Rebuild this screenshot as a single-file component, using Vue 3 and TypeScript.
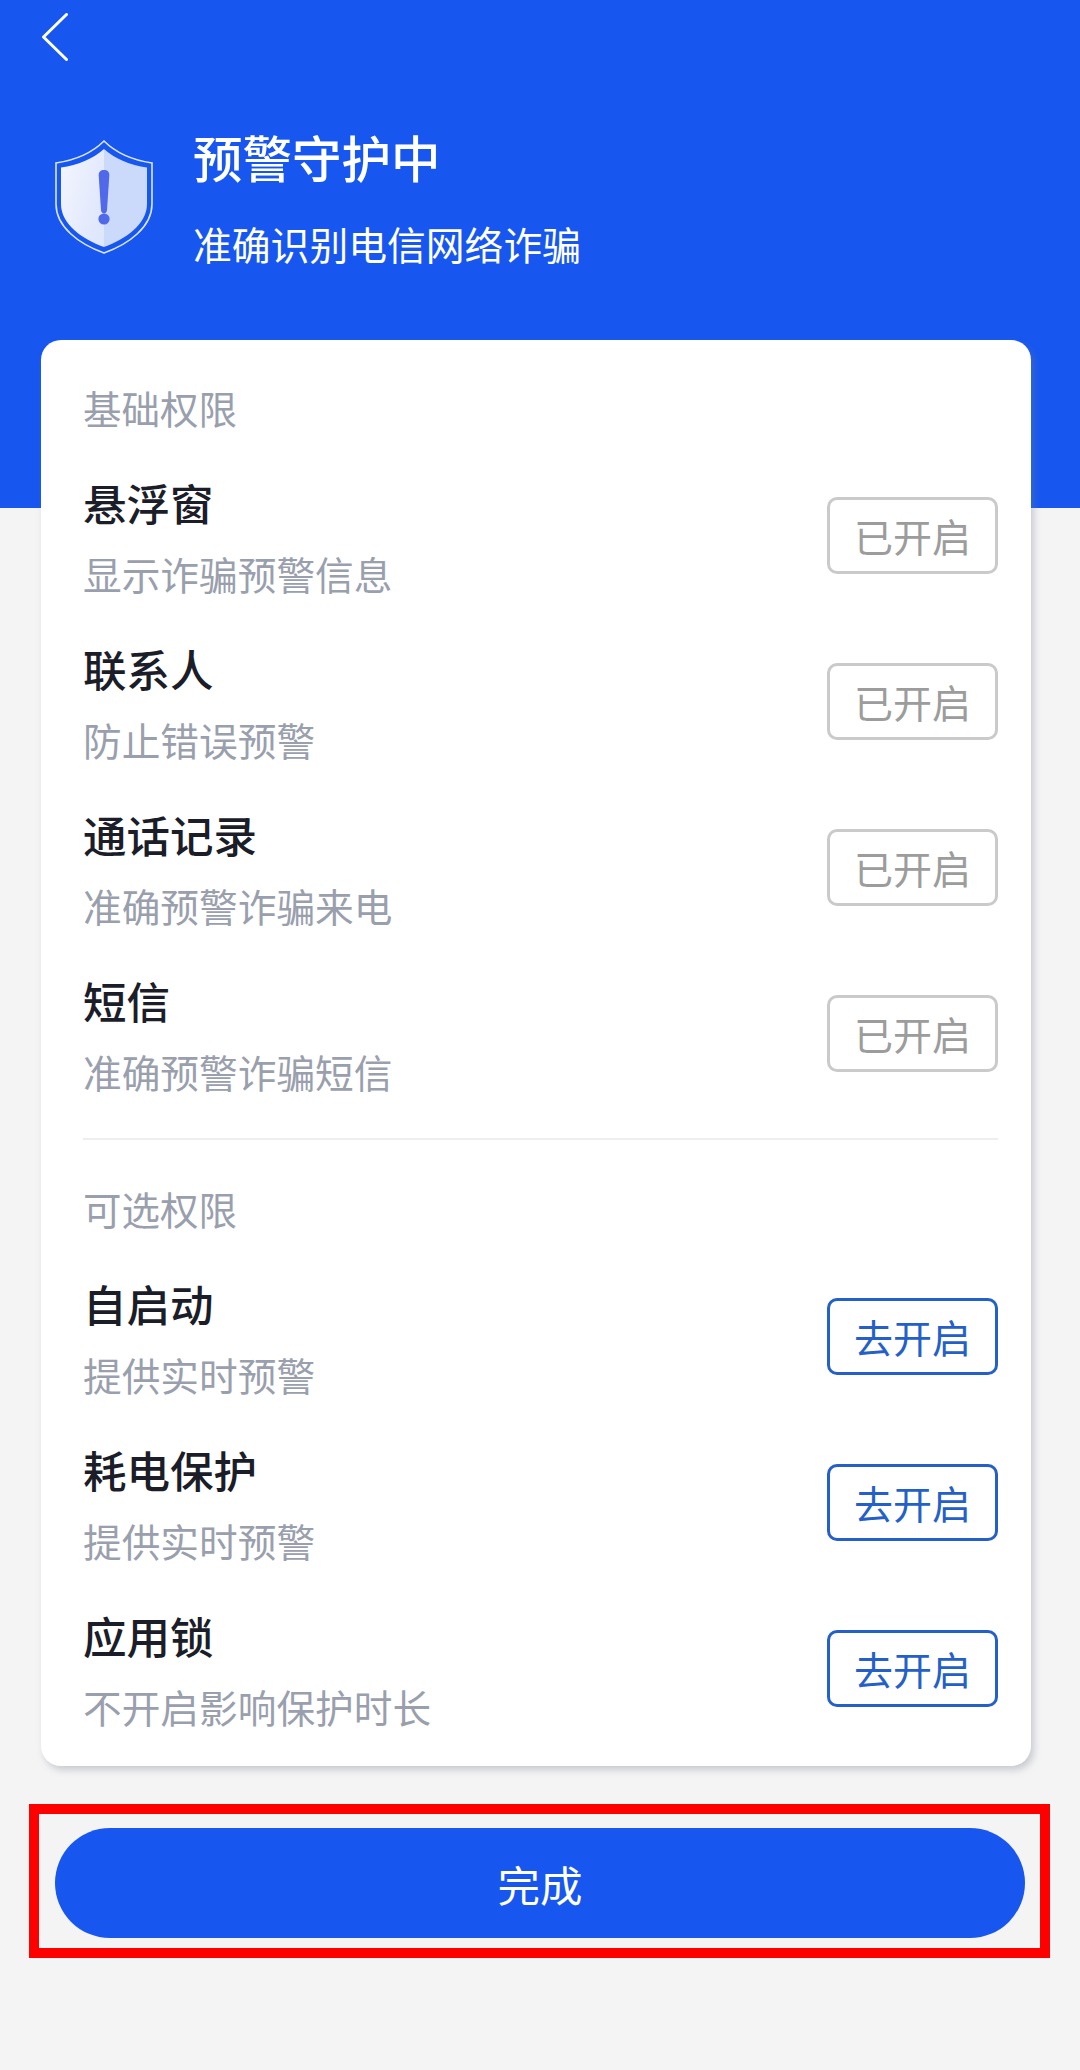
<script setup lang="ts">
interface Perm {
  name: string
  desc: string
}

const basePerms: Perm[] = [
  { name: '悬浮窗', desc: '显示诈骗预警信息' },
  { name: '联系人', desc: '防止错误预警' },
  { name: '通话记录', desc: '准确预警诈骗来电' },
  { name: '短信', desc: '准确预警诈骗短信' },
]

const optionalPerms: Perm[] = [
  { name: '自启动', desc: '提供实时预警' },
  { name: '耗电保护', desc: '提供实时预警' },
  { name: '应用锁', desc: '不开启影响保护时长' },
]
</script>

<template>
  <div class="page">
    <header class="header">
      <svg class="back" width="28" height="48" viewBox="0 0 28 48" fill="none">
        <path d="M25.5 1.5 L2.5 24 L25.5 46.5" stroke="#fff" stroke-width="3" stroke-linecap="round" stroke-linejoin="round" />
      </svg>
      <div class="hero">
        <svg class="shield" width="98" height="114" viewBox="0 0 98 114" fill="none">
          <defs>
            <linearGradient id="shieldLeft" x1="0" y1="0" x2="1" y2="0.6">
              <stop offset="0" stop-color="#f4f6fe" />
              <stop offset="1" stop-color="#dfe7fc" />
            </linearGradient>
          </defs>
          <path d="M49 1 C37 13 21 20 1 23 V64 C1 87 24 104 49 113 C74 104 97 87 97 64 V23 C77 20 61 13 49 1 Z" stroke="#dbe5fd" stroke-width="1.6" />
          <path d="M49 9 C38 19 23 25 6 27.500 V64 C6 84 27 99 49 107 V9 Z" fill="url(#shieldLeft)" />
          <path d="M49 9 C60 19 75 25 92 27.500 V64 C92 84 71 99 49 107 Z" fill="#cbd9fb" />
          <path d="M49 30 C52.500 30 54.500 32 54.300 35.500 L52 70 C51.800 72.200 50.600 73.500 49 73.500 C47.400 73.500 46.200 72.200 46 70 L43.700 35.500 C43.500 32 45.500 30 49 30 Z" fill="#4f69ea" />
          <circle cx="49" cy="79" r="5.600" fill="#4f69ea" />
        </svg>
        <div class="hero-text">
          <div class="hero-title">预警守护中</div>
          <div class="hero-sub">准确识别电信网络诈骗</div>
        </div>
      </div>
    </header>

    <main class="card">
      <div class="section-label">基础权限</div>
      <div class="rows">
        <div v-for="p in basePerms" :key="p.name" class="row">
          <div class="info">
            <div class="name">{{ p.name }}</div>
            <div class="desc">{{ p.desc }}</div>
          </div>
          <div class="state done">已开启</div>
        </div>
      </div>

      <div class="divider"></div>

      <div class="section-label second">可选权限</div>
      <div class="rows">
        <div v-for="p in optionalPerms" :key="p.name" class="row">
          <div class="info">
            <div class="name">{{ p.name }}</div>
            <div class="desc">{{ p.desc }}</div>
          </div>
          <div class="state todo">去开启</div>
        </div>
      </div>
    </main>

    <button class="finish">完成</button>
    <!-- red annotation frame on top of the button -->
    <div class="annotation"></div>
  </div>
</template>

<style>
html,
body {
  margin: 0;
  background: #f4f4f5;
}
</style>

<style scoped>
.page {
  position: relative;
  width: 1080px;
  height: 2070px;
  overflow: hidden;
  background: #f4f4f5;
  font-family: "Noto Sans CJK SC", "Liberation Sans", sans-serif;
}

.header {
  height: 508px;
  box-sizing: border-box;
  padding: 13px 0 0 41px;
  background: #1757f0;
}

.back {
  display: block;
}

.hero {
  display: flex;
  align-items: flex-start;
  gap: 40px;
  margin-top: 78px;
  margin-left: 14px;
}

.shield {
  display: block;
  margin-top: 1px;
}

.hero-text {
  color: #fff;
}

.hero-title {
  font-size: 49.500px;
  line-height: 60px;
  font-weight: 500;
  margin-top: -12px;
}

.hero-sub {
  font-size: 38.800px;
  line-height: 50px;
  margin-top: 31px;
}

.card {
  box-sizing: border-box;
  width: 990px;
  height: 1426px;
  margin: -168px 0 0 41px;
  padding: 42px 33px 13px 42px;
  background: #fff;
  border-radius: 20px;
  box-shadow: 3px 4px 7px rgba(120, 125, 140, 0.35);
}

.section-label {
  font-size: 38.500px;
  line-height: 50px;
  color: #9a9fae;
}

.rows {
  margin-top: 20px;
}

.row {
  display: flex;
  align-items: center;
  justify-content: space-between;
  height: 166px;
}

.info {
  margin-top: 3px;
}

.name {
  font-size: 43.500px;
  line-height: 54px;
  font-weight: 500;
  color: #1b1d29;
}

.desc {
  font-size: 38.700px;
  line-height: 50px;
  margin-top: 18px;
  color: #9a9fae;
}

.state {
  box-sizing: border-box;
  width: 171px;
  height: 77px;
  border-radius: 10px;
  border: 3px solid;
  display: flex;
  align-items: center;
  justify-content: center;
  font-size: 39px;
}

.state.done {
  border-color: #cacaca;
  color: #9c9c9c;
}

.state.todo {
  border-color: #2560c8;
  color: #2560c8;
}

.divider {
  height: 2px;
  margin-top: 22px;
  background: #eeeef0;
}

.section-label.second {
  margin-top: 43px;
}

.section-label.second + .rows {
  margin-top: 20px;
}

.finish {
  display: block;
  width: 970px;
  height: 110px;
  margin: 62px 0 0 55px;
  padding: 0;
  border: none;
  border-radius: 55px;
  background: #1757f0;
  color: #fff;
  font-family: inherit;
  font-size: 42.500px;
}

.annotation {
  position: absolute;
  left: 29px;
  top: 1804px;
  width: 1021px;
  height: 154px;
  box-sizing: border-box;
  border: 10px solid #ff0000;
}
</style>
